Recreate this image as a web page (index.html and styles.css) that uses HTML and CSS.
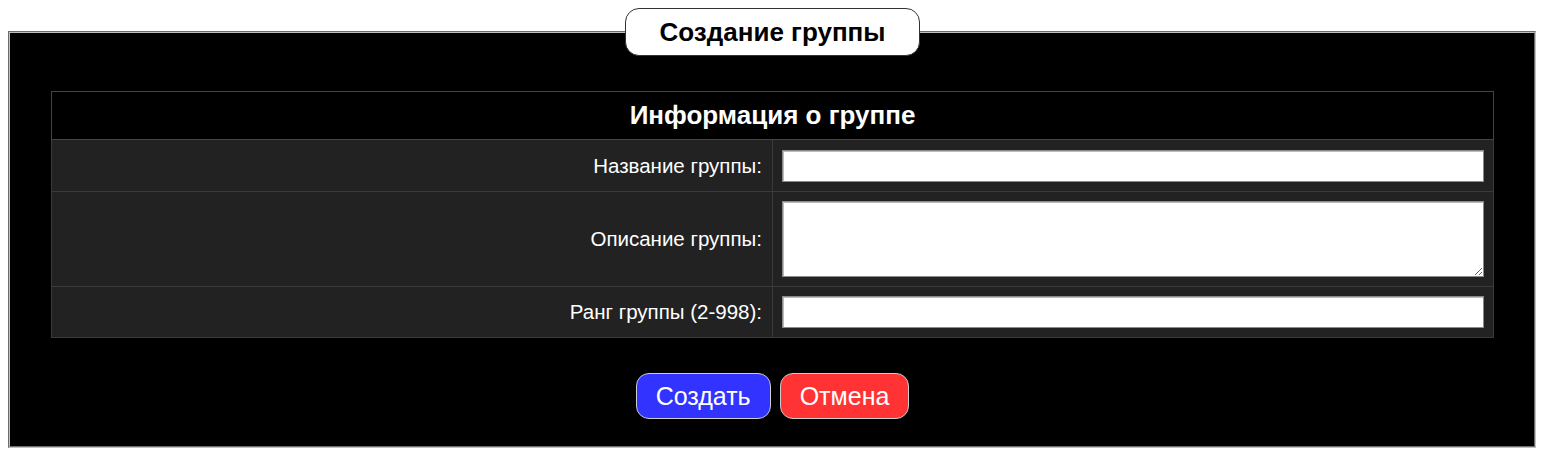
FILE: index.html
```html
<!DOCTYPE html>
<html lang="ru">
<head>
<meta charset="utf-8">
<title>Создание группы</title>
<link rel="stylesheet" href="styles.css">
</head>
<body>
<form class="panel">
  <fieldset class="box">
    <legend class="box-title">Создание группы</legend>
    <table class="info">
      <thead>
        <tr><th colspan="2" class="info-head">Информация о группе</th></tr>
      </thead>
      <tbody>
        <tr class="row row-name">
          <td class="label">Название группы:</td>
          <td class="field"><input class="text" type="text"></td>
        </tr>
        <tr class="row row-desc">
          <td class="label">Описание группы:</td>
          <td class="field"><textarea class="area"></textarea></td>
        </tr>
        <tr class="row row-rank">
          <td class="label">Ранг группы (2-998):</td>
          <td class="field"><input class="text" type="text"></td>
        </tr>
      </tbody>
    </table>
    <div class="actions">
      <button type="submit" class="btn btn-create">Создать</button>
      <button type="button" class="btn btn-cancel">Отмена</button>
    </div>
  </fieldset>
</form>
</body>
</html>
```
FILE: styles.css
```css
html, body {
  margin: 0;
  padding: 0;
  background: #fff;
}
body {
  padding: 8px 8px 0 8px;
  font-family: "Liberation Sans", Arial, sans-serif;
}
.panel {
  margin: 0;
}
.box {
  margin: 0;
  border: 2px groove #c0c0c0;
  background: #000;
  padding: 35px 40px 27px 41px;
  min-width: 0;
}
.box-title {
  margin: 0 auto;
  background: #fff;
  color: #000;
  border: 1px solid #333;
  border-radius: 14px;
  box-sizing: border-box;
  width: 295px;
  height: 48px;
  padding: 0;
  text-align: center;
  font-weight: bold;
  font-size: 26px;
  line-height: 46px;
}
.info {
  width: 100%;
  border-collapse: collapse;
  border: 1px solid #444;
  color: #fff;
}
.info-head {
  height: 47px;
  padding: 0;
  background: #000;
  font-size: 26px;
  font-weight: bold;
  text-align: center;
  border: 1px solid #444;
}
.row td {
  background: #222;
  border: 1px solid #3a3a3a;
}
.label {
  width: 50%;
  text-align: right;
  font-size: 20.5px;
  padding: 0 10px 0 0;
}
.field {
  padding: 0 9px 0 9px;
}
.row-name td { height: 51px; }
.row-desc td { height: 94px; }
.row-rank td { height: 50px; }
.text, .area {
  display: block;
  box-sizing: border-box;
  width: 100%;
  margin: 0;
  border: 1px solid #8a8a8a;
  box-shadow: inset 1px 1px 0 #bbb;
  background: #fff;
  font-family: inherit;
  font-size: 16px;
}
.text {
  height: 32px;
}
.area {
  height: 76px;
  resize: both;
}
.actions {
  display: flex;
  justify-content: center;
  gap: 9px;
  margin-top: 35px;
}
.btn {
  box-sizing: border-box;
  height: 46px;
  padding: 0 19px;
  border: 1px solid #ccc;
  border-radius: 13px;
  color: #fff;
  font-family: inherit;
  font-size: 25px;
}
.btn-create {
  background: #3333ff;
}
.btn-cancel {
  background: #ff3333;
}
```
